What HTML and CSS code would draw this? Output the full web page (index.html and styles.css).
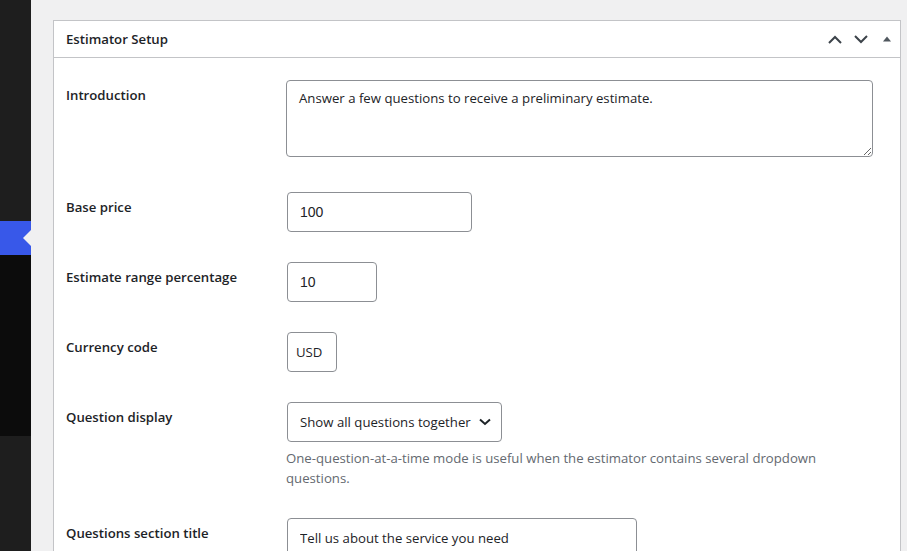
FILE: index.html
```html
<!DOCTYPE html>
<html lang="en">
<head>
	<meta charset="UTF-8">
	<title>Estimator Setup</title>
	<link rel="stylesheet" href="styles.css">
</head>
<body>
<div class="admin">
	<div class="sidebar">
		<div class="menu-top"></div>
		<div class="menu-current"></div>
		<div class="submenu"></div>
		<div class="menu-rest"></div>
	</div>

	<div class="content">
		<div class="postbox">
			<div class="postbox-header">
				<h2>Estimator Setup</h2>
				<div class="handle-actions">
					<button class="handle-btn" type="button" aria-label="Move up">
						<svg width="14" height="9" viewBox="0 0 14 9"><path d="M1 8 L7 2 L13 8" fill="none" stroke="#3c434a" stroke-width="2"/></svg>
					</button>
					<button class="handle-btn" type="button" aria-label="Move down">
						<svg width="14" height="9" viewBox="0 0 14 9"><path d="M1 1 L7 7 L13 1" fill="none" stroke="#3c434a" stroke-width="2"/></svg>
					</button>
					<button class="handle-btn" type="button" aria-label="Toggle panel">
						<svg width="8" height="6" viewBox="0 0 8 6"><path d="M0 5.5 L4 0.5 L8 5.5 Z" fill="#50575e"/></svg>
					</button>
				</div>
			</div>

			<div class="inside">
				<table class="form-table">
					<tr>
						<th>Introduction</th>
						<td><textarea class="intro" rows="3">Answer a few questions to receive a preliminary estimate.</textarea></td>
					</tr>
					<tr>
						<th>Base price</th>
						<td><input class="field field-num w-base" type="text" value="100"></td>
					</tr>
					<tr>
						<th>Estimate range percentage</th>
						<td><input class="field field-num w-range" type="text" value="10"></td>
					</tr>
					<tr>
						<th>Currency code</th>
						<td><input class="field w-code" type="text" value="USD"></td>
					</tr>
					<tr>
						<th>Question display</th>
						<td>
							<span class="select-wrap">
								<select class="field w-select">
									<option>Show all questions together</option>
									<option>Show one question at a time</option>
								</select>
								<svg class="select-arrow" width="12" height="8" viewBox="0 0 12 8"><path d="M1 1.5 L6 6 L11 1.5" fill="none" stroke="#1d2327" stroke-width="2"/></svg>
							</span>
							<p class="description">One-question-at-a-time mode is useful when the estimator contains several dropdown questions.</p>
						</td>
					</tr>
					<tr>
						<th>Questions section title</th>
						<td><input class="field w-title" type="text" value="Tell us about the service you need"></td>
					</tr>
				</table>
			</div>
		</div>
	</div>
</div>
</body>
</html>
```

FILE: styles.css
```css
*{margin:0;padding:0;box-sizing:border-box;}
html,body{height:100%;}
body{
	background:#f0f0f1;
	color:#1d2327;
	font-family:"Open Sans","Noto Sans",sans-serif;
	font-size:13.2px;
	overflow:hidden;
}
.admin{
	display:flex;
	height:100%;
}

/* left admin menu */
.sidebar{
	width:31px;
	flex-shrink:0;
	display:flex;
	flex-direction:column;
	background:#1e1e1e;
}
.menu-top{height:221px;}
.menu-current{
	height:34px;
	background:#3858e9;
	position:relative;
}
.menu-current:after{
	content:"";
	position:absolute;
	right:0;
	top:9px;
	border:8px solid transparent;
	border-right-color:#f0f0f1;
}
.submenu{
	height:181px;
	background:#0c0c0c;
}
.menu-rest{flex:1;}

/* content */
.content{
	flex:1;
	padding:20px 6px 0 22px;
}
.postbox{
	background:#fff;
	border:1px solid #c3c4c7;
	border-bottom:0;
	min-height:600px;
}
.postbox-header{
	display:flex;
	align-items:center;
	justify-content:space-between;
	height:37px;
	border-bottom:1px solid #c3c4c7;
	padding-left:12px;
}
.postbox-header h2{
	font-size:13.2px;
	font-weight:600;
	line-height:1.4;
}
.handle-actions{display:flex;}
.handle-btn{
	width:26px;
	height:36px;
	border:0;
	background:none;
	display:flex;
	align-items:center;
	justify-content:center;
}

.inside{padding:0 12px 12px;}
.form-table{
	border-collapse:collapse;
	margin-top:7px;
	width:100%;
}
.form-table th{
	width:210px;
	padding:21px 10px 20px 0;
	text-align:left;
	vertical-align:top;
	font-size:13.2px;
	font-weight:600;
	line-height:18px;
}
.form-table td{
	padding:15px 10px;
	vertical-align:middle;
	line-height:18px;
}

/* fields */
.intro{
	display:inline-block;
	width:587px;
	height:77px;
	margin-bottom:1px;
	padding:7px 12px;
	border:1px solid #8c8f94;
	border-radius:4px;
	font-family:inherit;
	font-size:13.2px;
	line-height:20px;
	color:#1d2327;
	resize:vertical;
}
.field{
	height:40px;
	padding:0 12px;
	border:1px solid #8c8f94;
	border-radius:4px;
	font-family:inherit;
	font-size:13.2px;
	color:#1d2327;
	background:#fff;
	vertical-align:middle;
}
.field-num{font-family:"Liberation Sans",Arial,sans-serif;font-size:14px;}
.w-base{width:185px;margin-left:1px;}
.w-range{width:90px;margin-left:1px;}
.w-code{width:50px;padding:0 8px;margin-left:1px;}
.w-title{width:350px;margin-left:1px;}
.select-wrap{
	position:relative;
	display:inline-block;
	vertical-align:middle;
	margin-left:1px;
}
.w-select{
	width:215px;
	padding-right:28px;
	-webkit-appearance:none;
	appearance:none;
	display:block;
}
.select-arrow{
	position:absolute;
	right:11px;
	top:16px;
	pointer-events:none;
}
.description{
	margin-top:6px;
	max-width:560px;
	color:#646970;
	font-size:13.2px;
	line-height:20px;
}
```
